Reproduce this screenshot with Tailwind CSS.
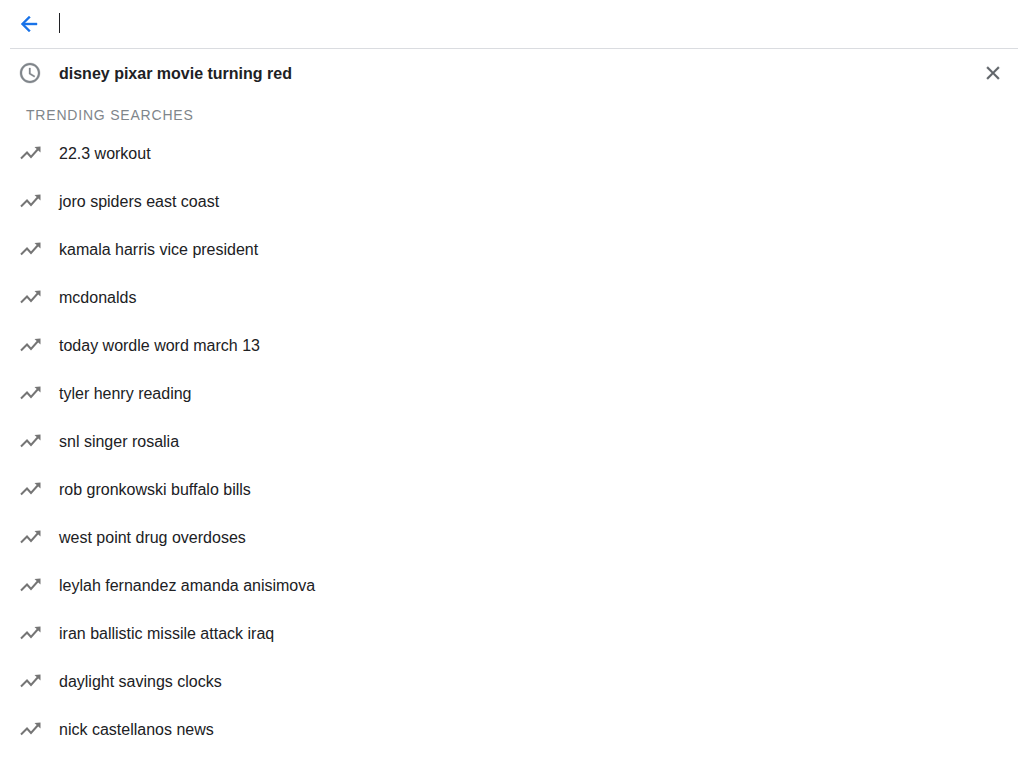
<!DOCTYPE html>
<html>
<head>
<meta charset="utf-8">
<script src="https://cdn.jsdelivr.net/npm/@tailwindcss/browser@4"></script>
</head>
<body class="bg-white font-['Liberation_Sans',Arial,sans-serif] text-[#202124] overflow-hidden">
<div class="h-[768px] overflow-hidden">
  <div class="ml-[10px] mr-[6px] h-[49px] flex items-center border-b border-[#dadce0] pl-[7px]">
    <svg class="w-[24px] h-[24px] shrink-0" viewBox="0 0 24 24" fill="#1a73e8" stroke="#1a73e8" stroke-width="0.4"><path d="M20 11H7.83l5.59-5.59L12 4l-8 8 8 8 1.41-1.41L7.83 13H20v-2z"/></svg>
    <div class="ml-[18px] w-px h-[20px] bg-[#202124] -translate-y-px"></div>
  </div>
  <div class="h-[48px] flex items-center pl-[18px] pr-[20px]">
    <svg class="w-[24px] h-[24px] shrink-0" viewBox="0 0 24 24" fill="#80868b" stroke="#80868b" stroke-width="0.3"><path d="M11.99 2C6.47 2 2 6.48 2 12s4.47 10 9.99 10C17.52 22 22 17.52 22 12S17.52 2 11.99 2zM12 20c-4.42 0-8-3.58-8-8s3.58-8 8-8 8 3.58 8 8-3.58 8-8 8zm.5-13H11v6l5.25 3.15.75-1.23-4.5-2.67z"/></svg>
    <span class="ml-[17px] pt-[2px] text-[16px] font-bold leading-[24px] flex-1">disney pixar movie turning red</span>
    <svg class="w-[22px] h-[22px] shrink-0" viewBox="0 0 24 24" fill="#5f6368" stroke="#5f6368" stroke-width="0.4"><path d="M19 6.41L17.59 5 12 10.59 6.41 5 5 6.41 10.59 12 5 17.59 6.41 19 12 13.41 17.59 19 19 17.59 13.41 12z"/></svg>
  </div>
  <div class="h-[32px] pl-[26px] pt-[4px] flex items-center text-[14px] leading-[20px] tracking-[0.8px] text-[#80868b]">TRENDING SEARCHES</div>
  <ul class="text-[16px] leading-[24px]">
    <li class="h-[48px] flex items-center pl-[18px]"><svg class="w-[24px] h-[24px] shrink-0" viewBox="0 0 24 24" fill="#757575"><path d="M3 17.5l6-6 4 4.5 8-9" fill="none" stroke="#757575" stroke-width="2"/><path d="M16.5 6l6-.5v6z"/></svg><span class="ml-[17px] pt-[2px]">22.3 workout</span></li>
    <li class="h-[48px] flex items-center pl-[18px]"><svg class="w-[24px] h-[24px] shrink-0" viewBox="0 0 24 24" fill="#757575"><path d="M3 17.5l6-6 4 4.5 8-9" fill="none" stroke="#757575" stroke-width="2"/><path d="M16.5 6l6-.5v6z"/></svg><span class="ml-[17px] pt-[2px]">joro spiders east coast</span></li>
    <li class="h-[48px] flex items-center pl-[18px]"><svg class="w-[24px] h-[24px] shrink-0" viewBox="0 0 24 24" fill="#757575"><path d="M3 17.5l6-6 4 4.5 8-9" fill="none" stroke="#757575" stroke-width="2"/><path d="M16.5 6l6-.5v6z"/></svg><span class="ml-[17px] pt-[2px]">kamala harris vice president</span></li>
    <li class="h-[48px] flex items-center pl-[18px]"><svg class="w-[24px] h-[24px] shrink-0" viewBox="0 0 24 24" fill="#757575"><path d="M3 17.5l6-6 4 4.5 8-9" fill="none" stroke="#757575" stroke-width="2"/><path d="M16.5 6l6-.5v6z"/></svg><span class="ml-[17px] pt-[2px]">mcdonalds</span></li>
    <li class="h-[48px] flex items-center pl-[18px]"><svg class="w-[24px] h-[24px] shrink-0" viewBox="0 0 24 24" fill="#757575"><path d="M3 17.5l6-6 4 4.5 8-9" fill="none" stroke="#757575" stroke-width="2"/><path d="M16.5 6l6-.5v6z"/></svg><span class="ml-[17px] pt-[2px]">today wordle word march 13</span></li>
    <li class="h-[48px] flex items-center pl-[18px]"><svg class="w-[24px] h-[24px] shrink-0" viewBox="0 0 24 24" fill="#757575"><path d="M3 17.5l6-6 4 4.5 8-9" fill="none" stroke="#757575" stroke-width="2"/><path d="M16.5 6l6-.5v6z"/></svg><span class="ml-[17px] pt-[2px]">tyler henry reading</span></li>
    <li class="h-[48px] flex items-center pl-[18px]"><svg class="w-[24px] h-[24px] shrink-0" viewBox="0 0 24 24" fill="#757575"><path d="M3 17.5l6-6 4 4.5 8-9" fill="none" stroke="#757575" stroke-width="2"/><path d="M16.5 6l6-.5v6z"/></svg><span class="ml-[17px] pt-[2px]">snl singer rosalia</span></li>
    <li class="h-[48px] flex items-center pl-[18px]"><svg class="w-[24px] h-[24px] shrink-0" viewBox="0 0 24 24" fill="#757575"><path d="M3 17.5l6-6 4 4.5 8-9" fill="none" stroke="#757575" stroke-width="2"/><path d="M16.5 6l6-.5v6z"/></svg><span class="ml-[17px] pt-[2px]">rob gronkowski buffalo bills</span></li>
    <li class="h-[48px] flex items-center pl-[18px]"><svg class="w-[24px] h-[24px] shrink-0" viewBox="0 0 24 24" fill="#757575"><path d="M3 17.5l6-6 4 4.5 8-9" fill="none" stroke="#757575" stroke-width="2"/><path d="M16.5 6l6-.5v6z"/></svg><span class="ml-[17px] pt-[2px]">west point drug overdoses</span></li>
    <li class="h-[48px] flex items-center pl-[18px]"><svg class="w-[24px] h-[24px] shrink-0" viewBox="0 0 24 24" fill="#757575"><path d="M3 17.5l6-6 4 4.5 8-9" fill="none" stroke="#757575" stroke-width="2"/><path d="M16.5 6l6-.5v6z"/></svg><span class="ml-[17px] pt-[2px]">leylah fernandez amanda anisimova</span></li>
    <li class="h-[48px] flex items-center pl-[18px]"><svg class="w-[24px] h-[24px] shrink-0" viewBox="0 0 24 24" fill="#757575"><path d="M3 17.5l6-6 4 4.5 8-9" fill="none" stroke="#757575" stroke-width="2"/><path d="M16.5 6l6-.5v6z"/></svg><span class="ml-[17px] pt-[2px]">iran ballistic missile attack iraq</span></li>
    <li class="h-[48px] flex items-center pl-[18px]"><svg class="w-[24px] h-[24px] shrink-0" viewBox="0 0 24 24" fill="#757575"><path d="M3 17.5l6-6 4 4.5 8-9" fill="none" stroke="#757575" stroke-width="2"/><path d="M16.5 6l6-.5v6z"/></svg><span class="ml-[17px] pt-[2px]">daylight savings clocks</span></li>
    <li class="h-[48px] flex items-center pl-[18px]"><svg class="w-[24px] h-[24px] shrink-0" viewBox="0 0 24 24" fill="#757575"><path d="M3 17.5l6-6 4 4.5 8-9" fill="none" stroke="#757575" stroke-width="2"/><path d="M16.5 6l6-.5v6z"/></svg><span class="ml-[17px] pt-[2px]">nick castellanos news</span></li>
  </ul>
</div>
</body>
</html>
